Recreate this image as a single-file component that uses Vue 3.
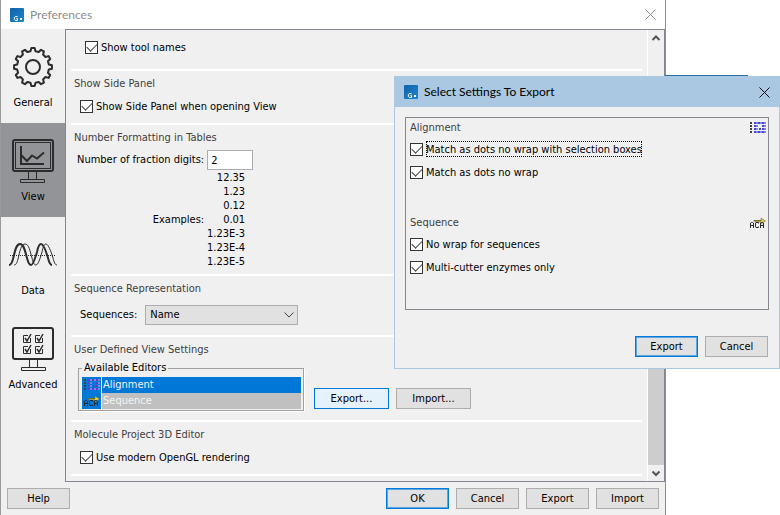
<script setup>
import { ref } from 'vue'

const gear = (() => {
  const pts = []
  const teeth = 12
  for (let i = 0; i < teeth; i++) {
    for (const [offset, radius] of [[-9, 16], [-5, 19], [5, 19], [9, 16]]) {
      const a = ((i * 360 / teeth + offset) * Math.PI) / 180
      pts.push(`${(24 + radius * Math.sin(a)).toFixed(2)},${(24 - radius * Math.cos(a)).toFixed(2)}`)
    }
  }
  return pts.join(' ')
})()

const tabs = ['General', 'View', 'Data', 'Advanced']
const activeTab = ref('View')

const toolNames = ref(true)
const sidePanel = ref(true)
const openGl = ref(true)
const digits = ref('2')
const sequenceLabel = ref('Name')
const examples = ['12.35', '1.23', '0.12', '0.01', '1.23E-3', '1.23E-4', '1.23E-5']
const ticks = [[14, 9], [26, 9], [14, 20], [26, 20]]

const groups = ref([
  {
    name: 'Alignment',
    items: [
      { label: 'Match as dots no wrap with selection boxes', on: true, focused: true },
      { label: 'Match as dots no wrap', on: true },
    ],
  },
  {
    name: 'Sequence',
    items: [
      { label: 'No wrap for sequences', on: true },
      { label: 'Multi-cutter enzymes only', on: true },
    ],
  },
])
</script>

<template>
  <svg class="defs" aria-hidden="true">
    <defs>
      <linearGradient id="logo-fill" x1="0" y1="0" x2="1" y2="1">
        <stop offset="0" stop-color="#0f62a8" />
        <stop offset="1" stop-color="#2086cc" />
      </linearGradient>
      <symbol id="logo" viewBox="0 0 14 14">
        <rect width="14" height="14" rx="1" fill="url(#logo-fill)" />
        <path d="M7.6 8.6H5.2L4.4 9.4V11.6L5.2 12.4H7.5V10.6H6.4" fill="none" stroke="#fff" />
        <rect x="10" y="10" width="2" height="2" fill="#fff" />
      </symbol>
      <symbol id="close" viewBox="0 0 11 11">
        <path d="M.5 .5 10.5 10.5M10.5 .5 .5 10.5" fill="none" stroke="currentColor" />
      </symbol>
      <symbol id="Alignment" viewBox="0 0 17 12">
        <path d="M2 0V11" stroke="#404040" stroke-width="2" stroke-dasharray="2 1" />
        <g stroke-width="2" stroke-dasharray="2 2">
          <path d="M5 1H17M5 10H17M5 4H9M13 4H17M5 7H9M13 7H17" stroke="#4848cc" />
          <path d="M7 1H17M7 10H17M7 4H9M15 4H17M7 7H9M15 7H17" stroke="#8484e4" />
          <path d="M10 7H12" stroke="#4848cc" />
        </g>
      </symbol>
      <symbol id="Sequence" viewBox="0 0 17 12">
        <path d="M5 4.500V3.500H13" fill="none" stroke="#77712c" />
        <path d="M12 1 16.5 4 12 7V5H6V4H12Z" fill="#dcca62" stroke="#77712c" stroke-width=".6" />
        <path d="M1.500 11V6L2.500 5.500H3.500L4.500 6V11M1.500 8.500H4.500M9.500 6.500V5.500H7L6.500 6V10L7 10.500H9.500V9.500M11.500 11V6L12.500 5.500H13.500L14.500 6V11M11.500 8.500H14.500" fill="none" stroke="#2c2c2c" />
      </symbol>
    </defs>
  </svg>

  <div class="desktop">
    <main class="window">
      <header class="titlebar">
        <svg class="logo"><use href="#logo" /></svg>
        <h1>Preferences</h1>
        <button class="close" aria-label="Close preferences"><svg><use href="#close" /></svg></button>
      </header>

      <div class="workspace">
        <nav class="tabs">
          <button v-for="tab in tabs" :key="tab" class="tab" :class="{ active: tab === activeTab }" @click="activeTab = tab">
            <svg viewBox="0 0 48 48" class="tab-icon" fill="none" stroke="#2b2d2c">
              <g v-if="tab === 'General'" stroke-width="2" stroke-linejoin="round">
                <polygon :points="gear" />
                <circle cx="24" cy="24" r="7" />
              </g>
              <g v-else-if="tab === 'View'">
                <rect x="4" y="3" width="40" height="31" rx="2" stroke-width="2" />
                <rect x="6.500" y="5.500" width="35" height="26" />
                <path d="M12 9V27H35M12 18 18 24 23 18.500 28 21.500 35 15.500" stroke-width="2" />
                <path d="M19.500 35V42M27.500 35V42M11.500 42.500H35.500V45.500H11.500Z" />
              </g>
              <g v-else-if="tab === 'Data'">
                <path d="M0 34C2 34 3 32 4 28C6 20 7 13 11 13S16 20 18 27C19 31 20 34 22 34S26 28 28 21C29 16 30 13 32 13S37 20 39 27C40 31 41 34 43 34" stroke-width="2" />
                <path d="M5 34C7 34 8 32 9 28C11 20 12 13 16 13S21 20 23 27C24 31 25 34 27 34S31 28 33 21C34 16 35 13 37 13S42 20 44 27C45 31 46 34 48 34" />
                <path d="M1 24.500H47" stroke-dasharray="1 1" />
              </g>
              <g v-else>
                <rect x="4" y="3" width="40" height="31" rx="2" stroke-width="2" />
                <path d="M20.500 35V42.500M28.500 35V42.500M12.500 42.500H36.500V45.500H12.500Z" />
                <g v-for="([x, y], i) in ticks" :key="i" :transform="`translate(${x} ${y})`">
                  <path d="M5 1.500H.5V8.500H7.500V4" />
                  <path d="M2 4 4 7 8 0" stroke-width="1.500" />
                </g>
              </g>
            </svg>
            <span>{{ tab }}</span>
          </button>
        </nav>

        <div class="viewport">
          <div class="sections">
            <section class="first">
              <label class="check inset"><input v-model="toolNames" type="checkbox" /><span>Show tool names</span></label>
            </section>

            <section>
              <h2>Show Side Panel</h2>
              <label class="check"><input v-model="sidePanel" type="checkbox" /><span>Show Side Panel when opening View</span></label>
            </section>

            <section>
              <h2>Number Formatting in Tables</h2>
              <div class="numbers">
                <label for="digits">Number of fraction digits:</label>
                <input id="digits" v-model="digits" class="text" type="text" />
                <span>Examples:</span>
                <ul class="examples"><li v-for="e in examples" :key="e">{{ e }}</li></ul>
              </div>
            </section>

            <section>
              <h2>Sequence Representation</h2>
              <div class="choice">
                <label for="sequences">Sequences:</label>
                <div class="combo">
                  <select id="sequences" v-model="sequenceLabel"><option>Name</option></select>
                  <svg viewBox="0 0 10 6"><path d="M.5 .5 5 5 9.500 .5" fill="none" stroke="#444" /></svg>
                </div>
              </div>
            </section>

            <section>
              <h2>User Defined View Settings</h2>
              <div class="editors">
                <fieldset>
                  <legend>Available Editors</legend>
                  <ul>
                    <li class="selected"><svg><use href="#Alignment" /></svg><span>Alignment</span></li>
                    <li><svg><use href="#Sequence" /></svg><span>Sequence</span></li>
                  </ul>
                </fieldset>
                <button class="btn wide hot">Export...</button>
                <button class="btn wide">Import...</button>
              </div>
            </section>

            <section>
              <h2>Molecule Project 3D Editor</h2>
              <label class="check"><input v-model="openGl" type="checkbox" /><span>Use modern OpenGL rendering</span></label>
            </section>
          </div>

          <div class="scrollbar" aria-hidden="true">
            <svg viewBox="0 0 16 16"><path d="M4.500 10 8 6.500 11.500 10" /></svg>
            <div class="thumb"></div>
            <svg viewBox="0 0 16 16"><path d="M4.500 6.500 8 10 11.500 6.500" /></svg>
          </div>
        </div>
      </div>

      <footer>
        <button class="btn help">Help</button>
        <button class="btn primary">OK</button>
        <button class="btn">Cancel</button>
        <button class="btn">Export</button>
        <button class="btn">Import</button>
      </footer>
    </main>

    <div class="dialog" role="dialog" aria-labelledby="dialog-title">
      <header class="titlebar">
        <svg class="logo"><use href="#logo" /></svg>
        <h1 id="dialog-title">Select Settings To Export</h1>
        <button class="close" aria-label="Close dialog"><svg><use href="#close" /></svg></button>
      </header>
      <div class="dialog-body">
        <div class="groups">
          <div v-for="g in groups" :key="g.name" class="group">
            <h2>{{ g.name }}<svg><use :href="'#' + g.name" /></svg></h2>
            <label v-for="item in g.items" :key="item.label" class="check" :class="{ focused: item.focused }">
              <input v-model="item.on" type="checkbox" /><span>{{ item.label }}</span>
            </label>
          </div>
        </div>
        <div class="actions">
          <button class="btn primary">Export</button>
          <button class="btn">Cancel</button>
        </div>
      </div>
    </div>
  </div>
</template>

<style>
body { margin: 0; background: #fff; }
</style>

<style scoped>
* { box-sizing: border-box; }
h1, h2, ul { margin: 0; padding: 0; font-size: inherit; font-weight: 400; list-style: none; }
button, input, select { font: inherit; color: inherit; }
.defs { position: absolute; width: 0; height: 0; }
.desktop {
  position: relative;
  min-height: 100vh;
  display: flex;
  font: 11px/16px "DejaVu Sans Condensed", "Noto Sans", sans-serif;
  color: #000;
}
.window {
  flex: 1;
  margin-right: 114px;
  display: flex;
  flex-direction: column;
  background: #f0f0f0;
  border-left: 1px solid #9a9a9a;
  border-right: 1px solid #8c9094;
}
.titlebar { display: flex; align-items: center; gap: 6px; height: 29px; padding: 0 9px; background: #fff; color: #8c8c8c; }
.titlebar h1 { flex: 1; font: 12px/16px Lato, "Noto Sans", sans-serif; }
.logo { width: 14px; height: 14px; }
.close { display: flex; padding: 0; border: 0; background: none; }
.close svg { width: 11px; height: 11px; }

.workspace { flex: 1; display: flex; }
.tabs { width: 64px; display: flex; flex-direction: column; }
.tab { display: flex; flex-direction: column; align-items: center; gap: 4px; height: 94px; padding: 14px 0 0; border: 0; background: none; }
.tab.active { background: #929497; }
.tab-icon { width: 48px; height: 48px; flex: none; }

.viewport { flex: 1; display: flex; border: 1px solid #828790; }
.sections { flex: 1; padding: 0 5px; }
section { padding: 5px 3px 7px; border-bottom: 2px solid #fff; }
section h2 { color: #404040; margin-bottom: 4px; }
.first { padding-top: 7px; padding-bottom: 12px; }
.check { display: flex; align-items: center; gap: 3px; height: 20px; width: fit-content; margin-left: 6px; }
.check.inset { margin-left: 11px; }
.check span { padding-top: 2px; line-height: 14px; }
.check input {
  appearance: none;
  width: 13px;
  height: 13px;
  margin: 0;
  border: 1px solid #333;
  background: #fff;
  display: grid;
}
.check input:checked::before {
  content: "";
  width: 9px;
  height: 5px;
  margin: 1px;
  border: solid #444;
  border-width: 0 0 1px 1px;
  transform: rotate(-45deg);
}
.numbers { display: grid; grid-template-columns: max-content 46px; gap: 1px 3px; align-items: center; margin-left: 3px; margin-bottom: -2px; }
.numbers > span { text-align: right; }
.text { width: 46px; height: 20px; padding: 0 3px; border: 1px solid #abadb3; background: #fff; }
.examples { justify-self: end; text-align: right; line-height: 14px; white-space: nowrap; margin-right: 8px; }
.choice { display: flex; align-items: center; gap: 8px; padding: 4px 0 3px 6px; }
.combo { position: relative; width: 153px; height: 20px; }
.combo select { appearance: none; width: 100%; height: 20px; padding: 0 4px; border: 1px solid #adadad; border-radius: 0; background: #e1e1e1; }
.combo svg { position: absolute; right: 4px; top: 7px; width: 10px; height: 6px; pointer-events: none; }

.editors { display: flex; align-items: flex-end; gap: 7px; margin-left: 4px; padding-bottom: 2px; }
fieldset { width: 226px; margin: 0 3px 0 0; padding: 3px 2px 1px 3px; border: 1px solid #a0a0a0; box-shadow: 1px 1px #fff; }
.editors .btn { margin-bottom: 2px; }
legend { padding: 0 2px; line-height: 12px; }
fieldset li { display: grid; grid-template-columns: 19px 1fr; gap: 1px; height: 16px; color: #f4f4f4; }
fieldset svg { width: 19px; height: 16px; padding: 2px 1px; background: #0078d7; }
fieldset span { padding-left: 1px; background: #c0c0c0; }
fieldset .selected span { background: #0078d7; }

.btn { width: 63px; height: 21px; padding: 0; border: 1px solid #adadad; background: #e1e1e1; line-height: 16px; }
.btn.wide { width: 75px; }
.btn.hot { border-color: #0078d7; background: #e5f1fb; }
.btn.primary { border-color: #0078d7; box-shadow: inset 0 0 0 1px #5ba6e3; }

.scrollbar { width: 17px; display: flex; flex-direction: column; border-left: 1px solid #fff; }
.scrollbar svg { width: 16px; height: 16px; fill: none; stroke: #555; stroke-width: 2; }
.thumb { flex: 1; margin-top: 60px; background: #cdcdcd; }
.scrollbar svg:first-child + .thumb { margin-top: 300px; }

footer { display: flex; gap: 7px; padding: 6px; }
.help { margin-right: auto; }

.dialog { position: absolute; top: 76px; left: 394px; right: 0; border: 1px solid #abc8e2; background: #f0f0f0; }
.dialog::before { content: ""; position: absolute; top: -2px; right: 31px; width: 83px; height: 1px; background: #2a70a8; }
.dialog .titlebar { height: 30px; background: #abc8e2; color: #000; }
.dialog-body { padding: 10px; }
.groups { padding-bottom: 1px; border: 1px solid #828790; }
.group { min-height: 95px; padding: 2px 2px 0 4px; display: flex; flex-direction: column; gap: 3px; }
.group h2 { display: flex; justify-content: space-between; align-items: center; color: #404040; }
.group svg { width: 17px; height: 12px; }
.group .check { margin-left: 0; }
.focused span { outline: 1px dotted #000; outline-offset: -1px; }
.actions { display: flex; justify-content: flex-end; gap: 7px; padding: 26px 1px 1px; }
</style>
